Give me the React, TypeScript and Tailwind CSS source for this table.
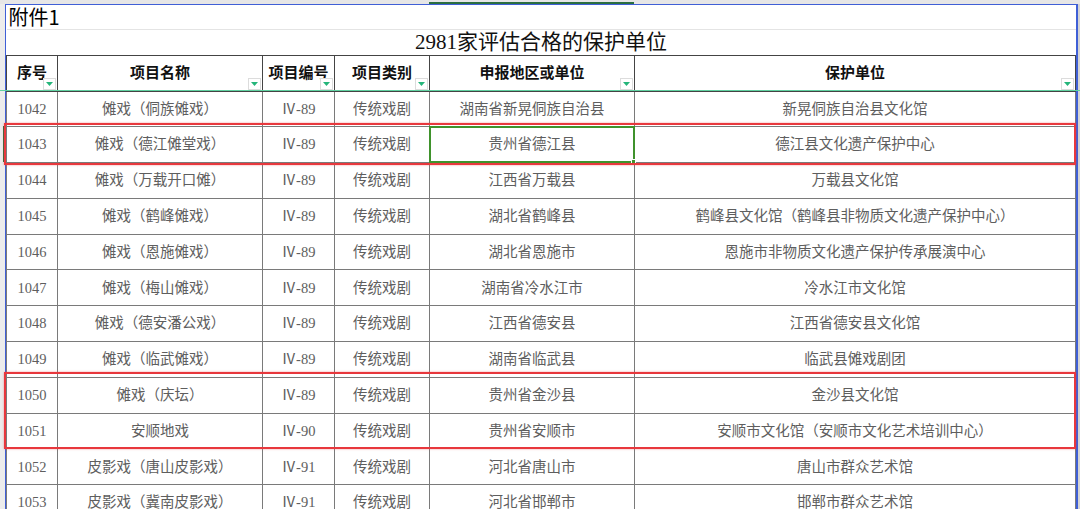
import { ReactNode } from 'react';

const SERIF = "font-['Liberation_Serif','Noto_Sans_CJK_SC',serif]";

const HEADERS = ['序号', '项目名称', '项目编号', '项目类别', '申报地区或单位', '保护单位'];

const ROWS = [
    ['1042', '傩戏（侗族傩戏）', 'Ⅳ-89', '传统戏剧', '湖南省新晃侗族自治县', '新晃侗族自治县文化馆'],
    ['1043', '傩戏（德江傩堂戏）', 'Ⅳ-89', '传统戏剧', '贵州省德江县', '德江县文化遗产保护中心'],
    ['1044', '傩戏（万载开口傩）', 'Ⅳ-89', '传统戏剧', '江西省万载县', '万载县文化馆'],
    ['1045', '傩戏（鹤峰傩戏）', 'Ⅳ-89', '传统戏剧', '湖北省鹤峰县', '鹤峰县文化馆（鹤峰县非物质文化遗产保护中心）'],
    ['1046', '傩戏（恩施傩戏）', 'Ⅳ-89', '传统戏剧', '湖北省恩施市', '恩施市非物质文化遗产保护传承展演中心'],
    ['1047', '傩戏（梅山傩戏）', 'Ⅳ-89', '传统戏剧', '湖南省冷水江市', '冷水江市文化馆'],
    ['1048', '傩戏（德安潘公戏）', 'Ⅳ-89', '传统戏剧', '江西省德安县', '江西省德安县文化馆'],
    ['1049', '傩戏（临武傩戏）', 'Ⅳ-89', '传统戏剧', '湖南省临武县', '临武县傩戏剧团'],
    ['1050', '傩戏（庆坛）', 'Ⅳ-89', '传统戏剧', '贵州省金沙县', '金沙县文化馆'],
    ['1051', '安顺地戏', 'Ⅳ-90', '传统戏剧', '贵州省安顺市', '安顺市文化馆（安顺市文化艺术培训中心）'],
    ['1052', '皮影戏（唐山皮影戏）', 'Ⅳ-91', '传统戏剧', '河北省唐山市', '唐山市群众艺术馆'],
    ['1053', '皮影戏（冀南皮影戏）', 'Ⅳ-91', '传统戏剧', '河北省邯郸市', '邯郸市群众艺术馆'],
];

// little autofilter button in the corner of a header cell
const FilterButton = () => (
    <span className="absolute right-[1px] bottom-[1px] flex h-[12px] w-[13px] items-center justify-center border border-[#dcdcdc] bg-white">
        <svg width="7" height="4" viewBox="0 0 7 4">
            <path d="M0 0 H7 L3.5 4 Z" fill="#25b57a" />
        </svg>
    </span>
);

const Cell = ({ children, selected }: { children: ReactNode; selected?: boolean }) => (
    <td className="relative h-[35.8px] border border-[#7a7a7a] p-0 text-center text-[14.5px] leading-none text-[#5e5e5e] whitespace-nowrap">
        {children}
        {selected && (
            <span className="absolute -inset-[1px] border-2 border-[#3f922c]">
                <span className="absolute -right-[3px] -bottom-[3px] h-[5px] w-[5px] border border-white bg-[#3f922c]" />
            </span>
        )}
    </td>
);

export default function App() {
    return (
        <div className={`relative h-[509px] w-[1080px] overflow-hidden bg-white ${SERIF}`}>
            {/* column header strip of the sheet */}
            <div className="flex h-[4px] bg-[#e6e6e6]">
                <div className="w-[429px]" />
                <div className="mt-auto h-[2px] w-[205px] bg-[#2b6e3f]" />
            </div>

            <div className="flex">
                {/* row header strip */}
                <div className="flex w-[5px] shrink-0 flex-col bg-[#ececec]">
                    <div className="h-[122px]" />
                    <div className="ml-auto h-[36px] w-[2px] bg-[#2b6e3f]" />
                </div>

                <div className="border-t border-l border-r-2 border-[#3f5fd6]">
                    <table className="w-[1069px] table-fixed border-collapse">
                        <colgroup>
                            <col className="w-[51px]" />
                            <col className="w-[205px]" />
                            <col className="w-[72px]" />
                            <col className="w-[95px]" />
                            <col className="w-[205px]" />
                            <col className="w-[441px]" />
                        </colgroup>
                        <tbody>
                            <tr className="h-[24px] border-b border-[#e4e4e4]">
                                <td colSpan={6} className="p-0 pl-[2px] font-['Noto_Sans_CJK_SC',sans-serif] text-[20px] leading-none text-black">
                                    附件1
                                </td>
                            </tr>
                            <tr className="h-[26px]">
                                <td colSpan={6} className="p-0 text-center text-[21px] leading-none text-[#111]">
                                    2981家评估合格的保护单位
                                </td>
                            </tr>
                            <tr className="h-[36px]">
                                {HEADERS.map((label) => (
                                    <th
                                        key={label}
                                        className="relative border border-[#444] p-0 text-center text-[15px] font-bold leading-none text-[#111]"
                                    >
                                        {label}
                                        <FilterButton />
                                    </th>
                                ))}
                            </tr>
                            {ROWS.map((row) => (
                                <tr key={row[0]}>
                                    {row.map((value, i) => (
                                        <Cell key={i} selected={row[0] === '1043' && i === 4}>
                                            {value}
                                        </Cell>
                                    ))}
                                </tr>
                            ))}
                        </tbody>
                    </table>
                </div>

                <div className="flex-1 bg-[#d4d4d4]" />
            </div>

            {/* frozen pane line */}
            <div className="absolute top-[90px] left-0 h-[1px] w-full bg-[#5fd0a0]" />

            {/* red highlight boxes */}
            <div className="absolute top-[123px] left-[4px] h-[42px] w-[1072px] border-2 border-[#e8383d] shadow-[0_0_2px_rgba(232,56,61,0.5)]" />
            <div className="absolute top-[372px] left-[4px] h-[77px] w-[1072px] border-2 border-[#e8383d] shadow-[0_0_2px_rgba(232,56,61,0.5)]" />
        </div>
    );
}
